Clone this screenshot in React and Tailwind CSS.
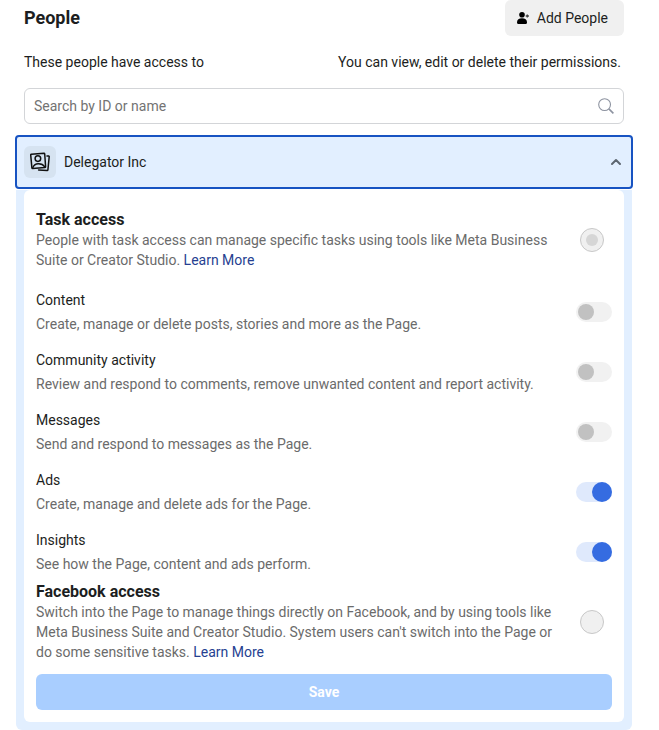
import { useState } from "react";

const TASKS = [
  {
    id: "content",
    title: "Content",
    description: "Create, manage or delete posts, stories and more as the Page.",
    on: false,
  },
  {
    id: "community",
    title: "Community activity",
    description: "Review and respond to comments, remove unwanted content and report activity.",
    on: false,
  },
  {
    id: "messages",
    title: "Messages",
    description: "Send and respond to messages as the Page.",
    on: false,
  },
  {
    id: "ads",
    title: "Ads",
    description: "Create, manage and delete ads for the Page.",
    on: true,
  },
  {
    id: "insights",
    title: "Insights",
    description: "See how the Page, content and ads perform.",
    on: true,
  },
];

function AddPersonIcon() {
  return (
    <svg className="size-4" viewBox="0 0 16 16" fill="currentColor" aria-hidden="true">
      <circle cx="7" cy="4.700" r="2.800" />
      <path d="M2 12.200C2 9.700 4 8.300 7 8.300s5 1.400 5 3.900c0 1.100-.5 1.800-1.400 1.800H3.400C2.500 14 2 13.300 2 12.200z" />
      <path d="M12.300 4.400v3.200M10.700 6h3.200" fill="none" stroke="#444444" strokeWidth="1.300" />
    </svg>
  );
}

function SearchIcon() {
  return (
    <svg className="size-4 shrink-0 text-[#8d93a0]" viewBox="0 0 16 16" fill="none" stroke="currentColor" aria-hidden="true">
      <circle cx="6.600" cy="6.600" r="5.900" strokeWidth="1.100" />
      <path d="M10.900 10.900l4.500 4.500" strokeWidth="1.600" />
    </svg>
  );
}

function PortraitsIcon() {
  return (
    <svg
      className="size-5"
      viewBox="0 0 20 20"
      fill="none"
      stroke="currentColor"
      strokeWidth="1.500"
      strokeLinecap="round"
      strokeLinejoin="round"
      aria-hidden="true"
    >
      <path d="M1.300 2.200L14 1.200q.600 0 .700.600l.900 12.900q0 .600-.600.700L2.600 16.500q-.600 0-.700-.600L.700 2.900q0-.600.600-.700z" />
      <circle cx="7.900" cy="6.600" r="2.800" />
      <path d="M2.700 15.900c.900-2.700 2.700-4 5.600-4.100 2.800-.100 5 .900 6.500 3.100" />
      <path d="M17 3.900l1.700.200q.600.100.500.700l-1.300 13.200q-.100.600-.700.600l-8.600-.700" />
    </svg>
  );
}

function AccessRadio({ id, checked, onChange }) {
  return (
    <div className="flex w-9 shrink-0 items-center justify-center pr-1">
      <input
        type="radio"
        name="access"
        id={id}
        checked={checked}
        onChange={onChange}
        className="grid size-6 appearance-none place-items-center rounded-full border border-[#c8c8c8] bg-[#f0f0f0] before:size-3 before:rounded-full checked:before:bg-[#d6d6d6]"
      />
    </div>
  );
}

function AccessOption({ id, title, checked, onChange, children }) {
  return (
    <div className="flex items-center gap-4">
      <div className="min-w-0 flex-1">
        <label htmlFor={id} className="block text-base leading-5 font-bold text-[#1c1e21]">
          {title}
        </label>
        <p className="text-[#6b6b6b]">
          {children}{" "}
          <a href="#learn" className="text-[#263f91]">
            Learn More
          </a>
        </p>
      </div>
      <AccessRadio id={id} checked={checked} onChange={onChange} />
    </div>
  );
}

function TaskRow({ task }) {
  const [on, setOn] = useState(task.on);
  return (
    <div className="flex items-center gap-4">
      <div className="flex min-w-0 flex-1 flex-col gap-1">
        <label htmlFor={task.id}>{task.title}</label>
        <p className="text-[#6b6b6b]">{task.description}</p>
      </div>
      <input
        type="checkbox"
        role="switch"
        id={task.id}
        checked={on}
        onChange={() => setOn(!on)}
        className="flex h-5 w-9 shrink-0 appearance-none items-center rounded-full bg-[#f1f1f1] px-0.5 before:size-4 before:rounded-full before:bg-[#c1c1c1] checked:justify-end checked:bg-[#dfe9fc] checked:px-0 checked:before:size-5 checked:before:bg-[#356ce1]"
      />
    </div>
  );
}

export default function App() {
  const [open, setOpen] = useState(true);
  const [access, setAccess] = useState("task");

  return (
    <main className="bg-white pr-[27px] pl-4 font-['Roboto','Liberation_Sans',sans-serif] text-sm leading-5 text-[#1c1e21]">
      <header className="flex h-9 items-center justify-between px-2">
        <h1 className="text-lg leading-6 font-bold">People</h1>
        <button type="button" className="flex h-9 items-center gap-1.5 rounded-md bg-[#f0f0f0] pr-4 pl-2.5">
          <span className="text-black">
            <AddPersonIcon />
          </span>
          Add People
        </button>
      </header>

      <p className="mt-4 flex justify-between px-2">
        <span>These people have access to</span>
        <span className="pr-[3px]">You can view, edit or delete their permissions.</span>
      </p>

      <div className="mx-2 mt-4 flex h-9 items-center gap-2 rounded-md border border-[#d3d5d8] px-[9px]">
        <input
          type="text"
          aria-label="Search by ID or name"
          placeholder="Search by ID or name"
          className="min-w-0 flex-1 bg-transparent outline-none placeholder:text-[#737373]"
        />
        <SearchIcon />
      </div>

      <section className="mt-3 flex flex-col gap-0.5">
        <button
          type="button"
          aria-expanded={open}
          onClick={() => setOpen(!open)}
          className="flex h-[52px] items-center gap-2 rounded-[3px] bg-[#e2efff] px-2 text-left outline-2 -outline-offset-1 outline-[#1753c2]"
        >
          <span className="flex size-8 items-center justify-center rounded-md bg-[#d6e3f1] text-[#111111]">
            <PortraitsIcon />
          </span>
          <span className="flex-1">Delegator Inc</span>
          <svg
            className="size-4 text-[#5d6670]"
            viewBox="0 0 16 16"
            fill="none"
            stroke="currentColor"
            strokeWidth="2"
            strokeLinecap="round"
            strokeLinejoin="round"
            aria-hidden="true"
          >
            <path d="M4 10l4-4 4 4" />
          </svg>
        </button>

        {open && (
          <div className="rounded-b-md bg-[#e2efff] px-2 pb-2">
            <form className="rounded-md bg-white px-3 pt-5 pb-3" onSubmit={(e) => e.preventDefault()}>
              <AccessOption
                id="task-access"
                title="Task access"
                checked={access === "task"}
                onChange={() => setAccess("task")}
              >
                People with task access can manage specific tasks using tools like Meta Business Suite or Creator
                Studio.
              </AccessOption>

              <div className="mt-5 mb-2 flex flex-col gap-4">
                {TASKS.map((task) => (
                  <TaskRow key={task.id} task={task} />
                ))}
              </div>

              <AccessOption
                id="facebook-access"
                title="Facebook access"
                checked={access === "facebook"}
                onChange={() => setAccess("facebook")}
              >
                Switch into the Page to manage things directly on Facebook, and by using tools like Meta Business Suite
                and Creator Studio. System users can't switch into the Page or do some sensitive tasks.
              </AccessOption>

              <button type="submit" className="mt-3 h-9 w-full rounded-md bg-[#a9ceff] font-bold text-white">
                Save
              </button>
            </form>
          </div>
        )}
      </section>
    </main>
  );
}
